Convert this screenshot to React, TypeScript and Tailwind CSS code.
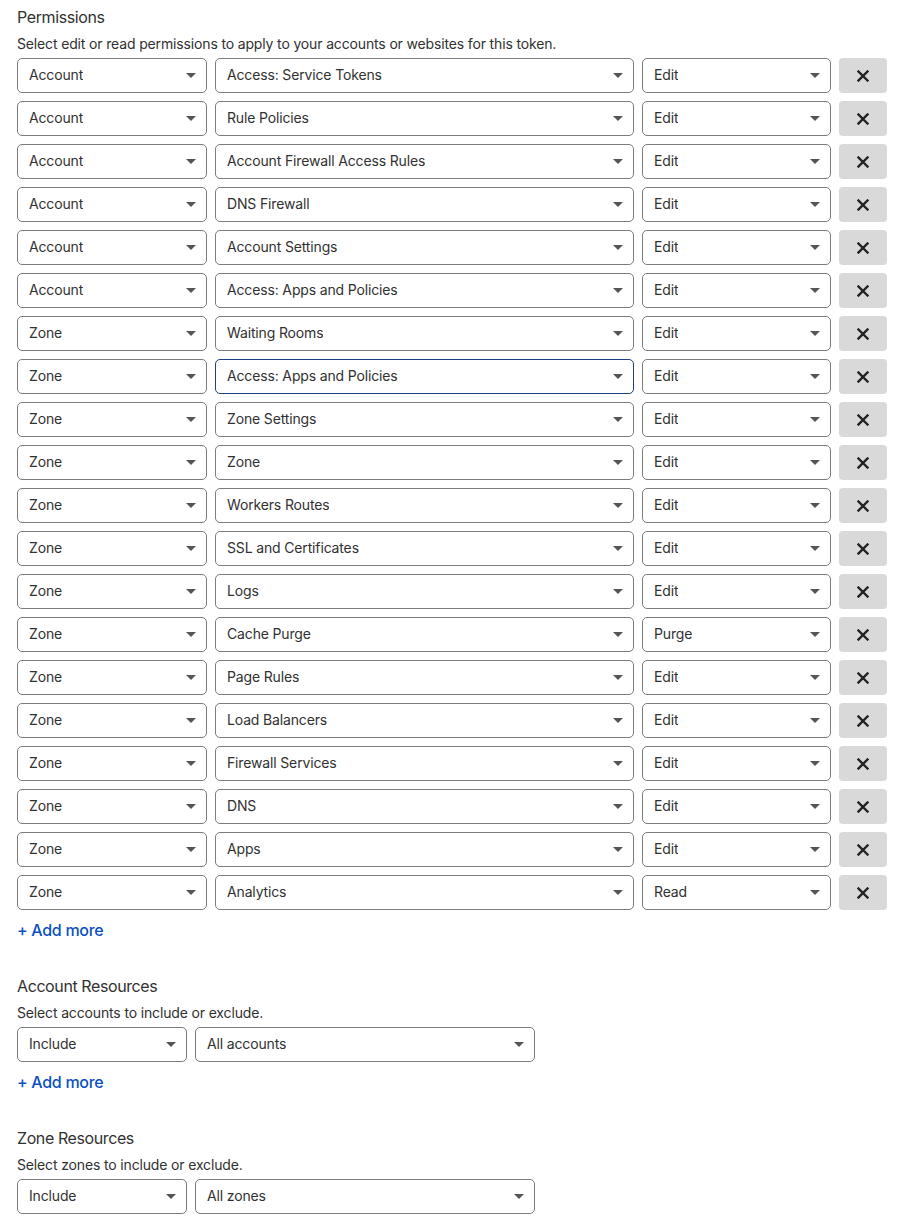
import React from 'react';

type Perm = { scope: 'Account' | 'Zone'; item: string; level: string };

const permissions: Perm[] = [
  { scope: 'Account', item: 'Access: Service Tokens', level: 'Edit' },
  { scope: 'Account', item: 'Rule Policies', level: 'Edit' },
  { scope: 'Account', item: 'Account Firewall Access Rules', level: 'Edit' },
  { scope: 'Account', item: 'DNS Firewall', level: 'Edit' },
  { scope: 'Account', item: 'Account Settings', level: 'Edit' },
  { scope: 'Account', item: 'Access: Apps and Policies', level: 'Edit' },
  { scope: 'Zone', item: 'Waiting Rooms', level: 'Edit' },
  { scope: 'Zone', item: 'Access: Apps and Policies', level: 'Edit' },
  { scope: 'Zone', item: 'Zone Settings', level: 'Edit' },
  { scope: 'Zone', item: 'Zone', level: 'Edit' },
  { scope: 'Zone', item: 'Workers Routes', level: 'Edit' },
  { scope: 'Zone', item: 'SSL and Certificates', level: 'Edit' },
  { scope: 'Zone', item: 'Logs', level: 'Edit' },
  { scope: 'Zone', item: 'Cache Purge', level: 'Purge' },
  { scope: 'Zone', item: 'Page Rules', level: 'Edit' },
  { scope: 'Zone', item: 'Load Balancers', level: 'Edit' },
  { scope: 'Zone', item: 'Firewall Services', level: 'Edit' },
  { scope: 'Zone', item: 'DNS', level: 'Edit' },
  { scope: 'Zone', item: 'Apps', level: 'Edit' },
  { scope: 'Zone', item: 'Analytics', level: 'Read' },
];

const Caret = () => (
  <svg width="10" height="5" viewBox="0 0 10 5" className="shrink-0">
    <path d="M0 0h10L5 5z" fill="#555" />
  </svg>
);

const Select: React.FC<{ value: string; width: string; hovered?: boolean }> = ({
  value,
  width,
  hovered,
}) => (
  <div
    className={`${width} h-[35px] shrink-0 flex items-center justify-between pl-[11px] pr-[10px] rounded-[5px] border bg-white ${
      hovered ? 'border-[#1d4080]' : 'border-[#7c7c7c]'
    }`}
  >
    <span className="text-[14px] leading-5 -mt-[2px] tracking-[-0.15px] text-[#313131] truncate">{value}</span>
    <Caret />
  </div>
);

const RemoveButton = () => (
  <button className="w-[48px] h-[35px] shrink-0 rounded-[4px] bg-[#d9d9d9] flex items-center justify-center">
    <svg width="12" height="12" viewBox="0 0 12 12">
      <path d="M1.5 1.5l9 9M10.5 1.5l-9 9" stroke="#222" strokeWidth="2.4" strokeLinecap="square" />
    </svg>
  </button>
);

const AddMore = () => (
  <button className="mt-2 self-start text-[16px] leading-6 font-medium tracking-[-0.3px] text-[#0b4fc2]">
    + Add more
  </button>
);

const SectionHeader: React.FC<{ title: string; hint: string; className?: string }> = ({
  title,
  hint,
  className,
}) => (
  <>
    <h2 className={`text-[16px] leading-6 tracking-[-0.4px] text-[#313131] ${className ?? ''}`}>{title}</h2>
    <p className="mt-[5px] text-[14px] leading-5 tracking-[-0.15px] text-[#313131]">{hint}</p>
  </>
);

export default function App() {
  return (
    <div
      className="min-h-screen bg-white px-[17px] pt-[5px] pb-4 flex flex-col"
      style={{ fontFamily: 'Inter, "Noto Sans", sans-serif' }}
    >
      <SectionHeader
        title="Permissions"
        hint="Select edit or read permissions to apply to your accounts or websites for this token."
      />
      <div className="mt-1 flex flex-col gap-2">
        {permissions.map((p, i) => (
          <div key={i} className="flex gap-2">
            <Select value={p.scope} width="w-[190px]" />
            <Select value={p.item} width="w-[419px]" hovered={i === 7} />
            <Select value={p.level} width="w-[189px]" />
            <RemoveButton />
          </div>
        ))}
      </div>
      <AddMore />

      <SectionHeader
        className="mt-8"
        title="Account Resources"
        hint="Select accounts to include or exclude."
      />
      <div className="mt-1 flex gap-2">
        <Select value="Include" width="w-[170px]" />
        <Select value="All accounts" width="w-[340px]" />
      </div>
      <AddMore />

      <SectionHeader className="mt-8" title="Zone Resources" hint="Select zones to include or exclude." />
      <div className="mt-1 flex gap-2">
        <Select value="Include" width="w-[170px]" />
        <Select value="All zones" width="w-[340px]" />
      </div>
    </div>
  );
}
